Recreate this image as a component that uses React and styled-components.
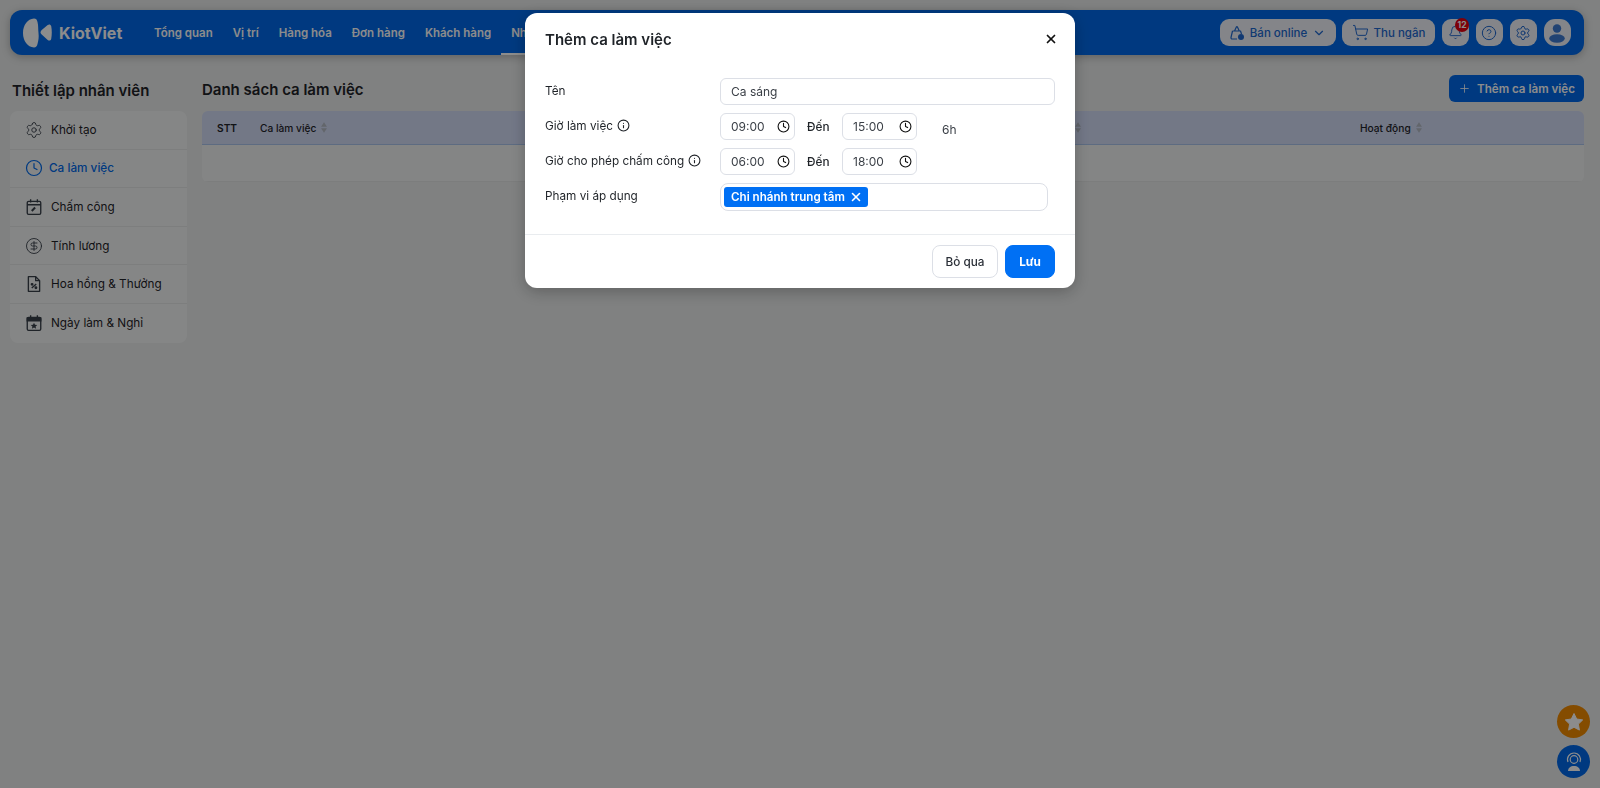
import React from 'react';
import styled, { createGlobalStyle } from 'styled-components';
import {
  Settings, Clock, CircleDollarSign, ShoppingCart, Bell, CircleHelp, ChevronDown, Plus, X, Info,
} from 'lucide-react';

const GlobalStyle = createGlobalStyle`
  * { box-sizing: border-box; }
  html, body { margin: 0; padding: 0; height: 100%; }
  body {
    background: #e9ebeb;
    font-family: Inter, "Noto Sans", sans-serif;
    color: #1f2328;
    overflow: hidden;
  }
`;

const Page = styled.div`
  width: 1600px;
  height: 788px;
  padding: 10px 16px 0 10px;
`;

const TopBar = styled.header`
  height: 45px;
  background: #0069e9;
  border-radius: 12px;
  display: flex;
  align-items: center;
  padding: 0 13px;
  box-shadow: 0 2px 8px rgba(0, 0, 0, 0.25);
`;

const Brand = styled.div`
  display: flex;
  align-items: center;
  gap: 7px;
  width: 121px;
  flex: none;
  color: #fff;
  font-size: 16px;
  font-weight: 700;
`;

const Nav = styled.nav`
  display: flex;
  flex: 1;
  height: 100%;
`;

const NavItem = styled.a`
  display: flex;
  align-items: center;
  height: 100%;
  padding: 0 10px;
  color: #fff;
  font-size: 11.5px;
  font-weight: 600;
  border-top: 2.5px solid transparent;
  border-bottom: 2.5px solid ${(p) => (p.$active ? '#fff' : 'transparent')};
`;

const Actions = styled.div`
  display: flex;
  align-items: center;
  gap: 6.5px;
`;

const ActionButton = styled.button`
  height: 27px;
  width: ${(p) => (p.$square ? '27.5px' : p.$width)};
  padding: 0;
  border: 0;
  border-radius: ${(p) => (p.$round ? '11px' : '9px')};
  background: #f0f3f9;
  color: #2068d0;
  font: 500 11.5px Inter, sans-serif;
  display: flex;
  align-items: center;
  justify-content: center;
  gap: 5px;
  position: relative;
`;

const Badge = styled.span`
  position: absolute;
  top: -1px;
  right: 0;
  width: 14px;
  height: 14px;
  border-radius: 50%;
  background: #e3000f;
  color: #fff;
  font-size: 8.5px;
  font-weight: 700;
  display: flex;
  align-items: center;
  justify-content: center;
`;

const Layout = styled.div`
  display: flex;
  gap: 15px;
  margin-top: 20px;
`;

const Sidebar = styled.aside`
  width: 177px;
  flex: none;
`;

const SideTitle = styled.h2`
  margin: 0;
  height: 26px;
  padding: 4px 0 0 2px;
  font-size: 15px;
  line-height: 24px;
  font-weight: 600;
`;

const SideList = styled.div`
  margin-top: 10px;
  background: #f3f5f5;
  border-radius: 8px;
`;

const SideItem = styled.a`
  height: 38.6px;
  display: flex;
  align-items: center;
  gap: ${(p) => (p.$active ? '6px' : '8px')};
  padding-left: 15px;
  font-size: 11.75px;
  color: ${(p) => (p.$active ? '#0069e9' : '#1f2328')};
  font-weight: ${(p) => (p.$active ? 500 : 400)};
  border-bottom: 1px solid #e4e6e6;
  &:last-child { border-bottom: 0; }
`;

const SideIcon = styled.span`
  display: flex;
  width: 18px;
  height: 18px;
  color: ${(p) => (p.$active ? '#0069e9' : '#39404a')};
`;

const Content = styled.main`
  flex: 1;
`;

const ContentHead = styled.div`
  height: 27px;
  display: flex;
  align-items: center;
  justify-content: space-between;
`;

const ContentTitle = styled.h1`
  margin: 2px 0 0;
  font-size: 15px;
  font-weight: 600;
`;

const AddButton = styled.button`
  height: 27px;
  width: 135px;
  border: 0;
  border-radius: 6px;
  background: #0069e9;
  color: #fff;
  font: 600 11.6px Inter, sans-serif;
  display: flex;
  align-items: center;
  justify-content: center;
  gap: 6px;
`;

const Table = styled.div`
  margin-top: 9px;
  border-radius: 6px;
  overflow: hidden;
`;

const TableHead = styled.div`
  height: 34px;
  background: #d1daf5;
  border-bottom: 1px solid #a9c4ec;
  display: grid;
  grid-template-columns: 43px 746px 354px 1fr;
  align-items: center;
  padding-left: 15px;
  font-size: 10.2px;
`;

const HeadCell = styled.div`
  display: flex;
  align-items: center;
  gap: 5px;
  font-weight: ${(p) => (p.$strong ? 600 : 500)};
`;

const TableRow = styled.div`
  height: 37px;
  background: #f1f3f3;
  border-bottom: 1px solid #e2e4e4;
`;

const Backdrop = styled.div`
  position: fixed;
  inset: 0;
  background: rgba(0, 0, 0, 0.45);
`;

const Modal = styled.div`
  position: absolute;
  top: 13px;
  left: 525px;
  width: 550px;
  height: 275px;
  background: #fff;
  border-radius: 12px;
  display: flex;
  flex-direction: column;
  box-shadow: 0 4px 16px rgba(0, 0, 0, 0.25);
`;

const ModalHead = styled.div`
  height: 52px;
  padding: 0 17px 0 20px;
  display: flex;
  align-items: center;
  justify-content: space-between;
  font-size: 15px;
  font-weight: 600;
`;

const Form = styled.div`
  padding: 13px 20px 0;
  display: flex;
  flex-direction: column;
  gap: 8px;
  flex: 1;
`;

const Row = styled.div`
  display: flex;
  align-items: center;
  min-height: 27px;
`;

const Label = styled.div`
  width: 175px;
  flex: none;
  display: flex;
  align-items: center;
  gap: 4px;
  padding-bottom: 2px;
  font-size: 11.75px;
`;

const Field = styled.div`
  height: 27px;
  border: 1px solid #dcdfe6;
  border-radius: 6px;
  display: flex;
  align-items: center;
  justify-content: space-between;
  padding: 0 4px 0 10px;
  font-size: 12px;
  color: #3a3f46;
  width: ${(p) => p.$width};
`;

const ToLabel = styled.span`
  width: 47px;
  padding-left: 12px;
  font-size: 11.75px;
  font-weight: 500;
`;

const Duration = styled.span`
  margin: 6px 0 0 25px;
  font-size: 12px;
  color: #3a3f46;
`;

const TagBox = styled.div`
  width: 328px;
  height: 28px;
  border: 1px solid #dcdfe6;
  border-radius: 8px;
  display: flex;
  align-items: center;
  padding-left: 3px;
`;

const Tag = styled.span`
  height: 20px;
  background: #0070f4;
  color: #fff;
  border-radius: 3px;
  padding: 0 5px 0 7px;
  display: flex;
  align-items: center;
  gap: 4px;
  font-size: 11.6px;
  font-weight: 600;
`;

const ModalFoot = styled.div`
  height: 54px;
  border-top: 1px solid #e9ecef;
  padding: 10px 20px 0;
  display: flex;
  justify-content: flex-end;
  gap: 7px;
`;

const FootButton = styled.button`
  height: 33px;
  width: ${(p) => (p.$primary ? '50px' : '66px')};
  border-radius: 8px;
  border: 1px solid ${(p) => (p.$primary ? '#0070f4' : '#dcdfe6')};
  background: ${(p) => (p.$primary ? '#0070f4' : '#fff')};
  color: ${(p) => (p.$primary ? '#fff' : '#2b3038')};
  font: ${(p) => (p.$primary ? 700 : 500)} 11.75px Inter, sans-serif;
`;

const Float = styled.button`
  position: fixed;
  left: 1557px;
  top: ${(p) => p.$top}px;
  width: 33px;
  height: 33px;
  border: 0;
  padding: 0;
  border-radius: 50%;
  background: ${(p) => p.$color};
  display: flex;
  align-items: center;
  justify-content: center;
`;

const Logo = () => (
  <svg width="29" height="30" viewBox="0 0 29 30" fill="#fff">
    <path d="M11 .5C4.500 1 0 7 0 15s4.500 14 11 14.500c2 0 3-1.500 3.500-3.500 1-3.500 1.500-7 1-11s0-7.500-1-11C14 1.500 13 .5 11 .5z" />
    <path d="M17.500 14.500c0-1 .5-1.800 1.200-2.500l6-5c1.500-1.200 3-.5 3.500 1 .8 4.500.8 8.500 0 13-.5 1.500-2 2.200-3.500 1l-6-5.500c-.7-.6-1.200-1.200-1.200-2z" />
  </svg>
);

const BagIcon = () => (
  <svg width="16" height="16" viewBox="0 0 16 16" fill="none" stroke="currentColor" strokeWidth="1.200">
    <path d="M3.500 6h8l1 3M5.500 6l2-4.200c.2-.4.6-.4.8 0l2 4.200M3.500 6L2 12.500c-.1.900.4 1.500 1.200 1.500H8" strokeLinejoin="round" />
    <circle cx="12" cy="12" r="3" fill="currentColor" stroke="none" />
  </svg>
);

const UserIcon = () => (
  <svg width="20" height="20" viewBox="0 0 18 18" fill="#3f7ad2">
    <circle cx="9" cy="5" r="3.800" />
    <ellipse cx="9" cy="14" rx="7" ry="3.800" />
  </svg>
);

const CalendarEdit = () => (
  <svg width="18" height="18" viewBox="0 0 16 16" fill="none" stroke="currentColor" strokeWidth="1.200">
    <rect x="2" y="3" width="12" height="11.500" rx="1.200" />
    <path d="M2 6h12M5 1v3M11 1v3" />
    <path d="M6 11.500l3-3" strokeWidth="1.800" />
  </svg>
);

const FilePercent = () => (
  <svg width="18" height="18" viewBox="0 0 16 16" fill="none" stroke="currentColor" strokeWidth="1.200">
    <path d="M3 1.500h6.500L13 5v9.500H3z" strokeLinejoin="round" />
    <path d="M9.500 1.500V5H13M6 11.500l4-3.500" />
    <circle cx="6.300" cy="8.300" r=".7" fill="currentColor" />
    <circle cx="9.700" cy="11.300" r=".7" fill="currentColor" />
  </svg>
);

const CalendarStar = () => (
  <svg width="18" height="18" viewBox="0 0 16 16" fill="none" stroke="currentColor" strokeWidth="1.200">
    <rect x="2" y="3" width="12" height="11.500" rx="1.200" />
    <path d="M2 3.500h12V6H2z" fill="currentColor" />
    <path d="M5 1v3M11 1v3" />
    <path d="M8 7.800l.9 1.800 2 .2-1.500 1.300.5 2L8 12.100l-1.900 1 .5-2-1.500-1.300 2-.2z" fill="currentColor" stroke="none" />
  </svg>
);

const SortIcon = () => (
  <svg width="6" height="11" viewBox="0 0 7 12" fill="#b4bac4">
    <path d="M3.500 0L7 5H0zM3.500 12L0 7h7z" />
  </svg>
);

const StarIcon = () => (
  <svg width="20" height="20" viewBox="0 0 20 20" fill="#fff">
    <path d="M10 1.500l2.700 5.500 6 .9-4.300 4.200 1 6L10 15.300l-5.400 2.800 1-6L1.300 7.900l6-.9z" stroke="#fff" strokeLinejoin="round" />
  </svg>
);

const AgentIcon = () => (
  <svg width="22" height="22" viewBox="0 0 22 22" fill="none" stroke="#fff" strokeWidth="1.200">
    <path d="M5 11a6.500 6.500 0 1 1 12 0" />
    <circle cx="11" cy="8.500" r="3.800" />
    <path d="M5 20c0-3 2.500-5 6-5s6 2 6 5z" fill="#fff" stroke="none" />
  </svg>
);

const navItems = ['Tổng quan', 'Vị trí', 'Hàng hóa', 'Đơn hàng', 'Khách hàng', 'Nhân viên'];

const sideItems = [
  { label: 'Khởi tạo', icon: <Settings size={18} strokeWidth={1.2} /> },
  { label: 'Ca làm việc', icon: <Clock size={18} strokeWidth={1.6} />, active: true },
  { label: 'Chấm công', icon: <CalendarEdit /> },
  { label: 'Tính lương', icon: <CircleDollarSign size={18} strokeWidth={1.2} /> },
  { label: 'Hoa hồng & Thưởng', icon: <FilePercent /> },
  { label: 'Ngày làm & Nghỉ', icon: <CalendarStar /> },
];

function TimeField({ value }) {
  return (
    <Field $width="75px">
      {value}
      <Clock size={13} strokeWidth={2} color="#111" />
    </Field>
  );
}

export default function App() {
  return (
    <>
      <GlobalStyle />
      <Page>
        <TopBar>
          <Brand>
            <Logo />
            KiotViet
          </Brand>
          <Nav>
            {navItems.map((item) => (
              <NavItem key={item} $active={item === 'Nhân viên'}>{item}</NavItem>
            ))}
          </Nav>
          <Actions>
            <ActionButton $width="116px">
              <BagIcon />
              Bán online
              <ChevronDown size={14} />
            </ActionButton>
            <ActionButton $width="93px">
              <ShoppingCart size={17} strokeWidth={1.4} />
              Thu ngân
            </ActionButton>
            <ActionButton $square>
              <Bell size={15} strokeWidth={1.5} />
              <Badge>12</Badge>
            </ActionButton>
            <ActionButton $square><CircleHelp size={16} strokeWidth={1.5} /></ActionButton>
            <ActionButton $square><Settings size={16} strokeWidth={1.5} /></ActionButton>
            <ActionButton $square $round><UserIcon /></ActionButton>
          </Actions>
        </TopBar>
        <Layout>
          <Sidebar>
            <SideTitle>Thiết lập nhân viên</SideTitle>
            <SideList>
              {sideItems.map((item) => (
                <SideItem key={item.label} $active={item.active}>
                  <SideIcon $active={item.active}>{item.icon}</SideIcon>
                  {item.label}
                </SideItem>
              ))}
            </SideList>
          </Sidebar>
          <Content>
            <ContentHead>
              <ContentTitle>Danh sách ca làm việc</ContentTitle>
              <AddButton>
                <Plus size={13} strokeWidth={1.5} />
                Thêm ca làm việc
              </AddButton>
            </ContentHead>
            <Table>
              <TableHead>
                <HeadCell $strong>STT</HeadCell>
                <HeadCell>Ca làm việc <SortIcon /></HeadCell>
                <HeadCell>Chi nhánh áp <SortIcon /></HeadCell>
                <HeadCell>Hoạt động <SortIcon /></HeadCell>
              </TableHead>
              <TableRow />
            </Table>
          </Content>
        </Layout>
      </Page>
      <Float $top={705} $color="#f08a00"><StarIcon /></Float>
      <Float $top={745} $color="#0069e9"><AgentIcon /></Float>
      <Backdrop>
        <Modal>
          <ModalHead>
            Thêm ca làm việc
            <X size={14} strokeWidth={3} color="#111" />
          </ModalHead>
          <Form>
            <Row>
              <Label>Tên</Label>
              <Field $width="335px">Ca sáng</Field>
            </Row>
            <Row>
              <Label>Giờ làm việc <Info size={13} strokeWidth={2} /></Label>
              <TimeField value="09:00" />
              <ToLabel>Đến</ToLabel>
              <TimeField value="15:00" />
              <Duration>6h</Duration>
            </Row>
            <Row>
              <Label>Giờ cho phép chấm công <Info size={13} strokeWidth={2} /></Label>
              <TimeField value="06:00" />
              <ToLabel>Đến</ToLabel>
              <TimeField value="18:00" />
            </Row>
            <Row>
              <Label>Phạm vi áp dụng</Label>
              <TagBox>
                <Tag>
                  Chi nhánh trung tâm
                  <X size={14} strokeWidth={2.8} />
                </Tag>
              </TagBox>
            </Row>
          </Form>
          <ModalFoot>
            <FootButton>Bỏ qua</FootButton>
            <FootButton $primary>Lưu</FootButton>
          </ModalFoot>
        </Modal>
      </Backdrop>
    </>
  );
}
